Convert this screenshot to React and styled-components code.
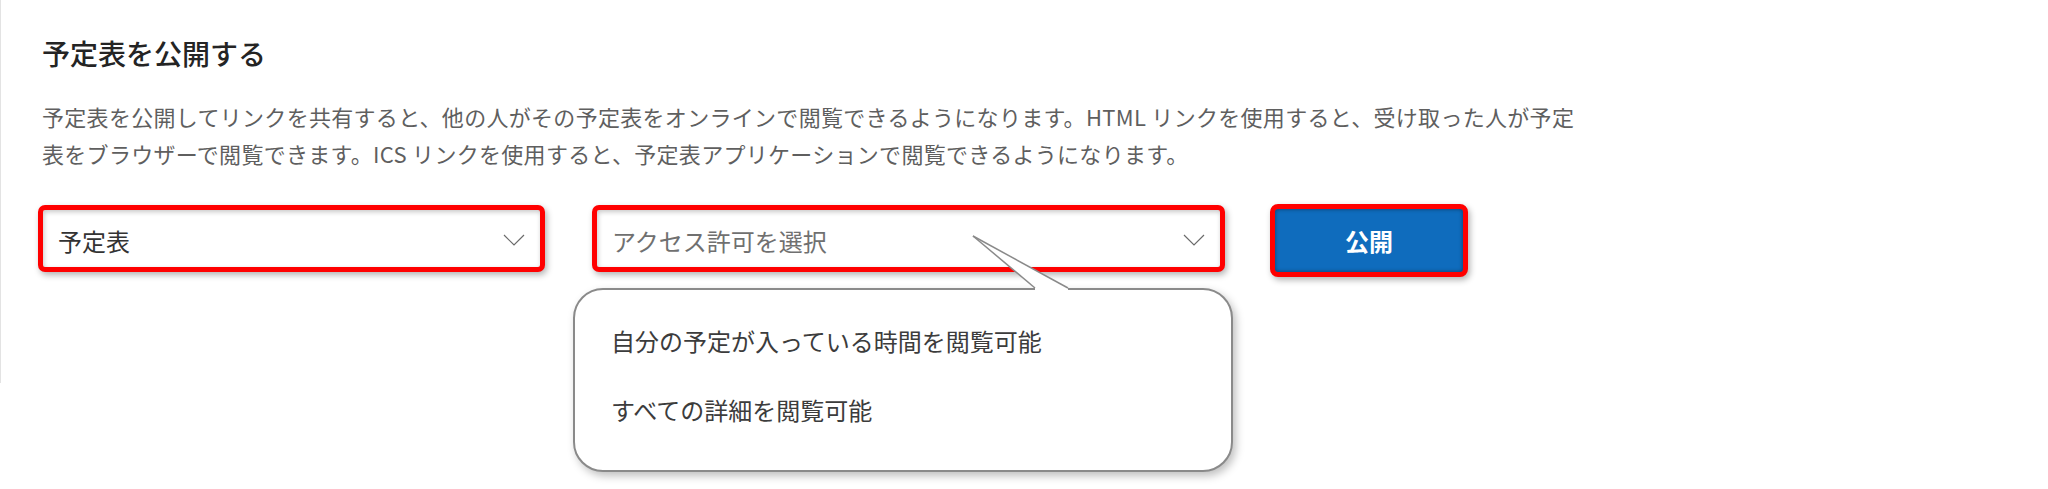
import React from 'react';
import styled, { createGlobalStyle } from 'styled-components';

const GlobalStyle = createGlobalStyle`
  body {
    margin: 0;
    background: #ffffff;
    font-family: "Noto Sans CJK JP", "Noto Sans", sans-serif;
  }
`;

const permissions = ['自分の予定が入っている時間を閲覧可能', 'すべての詳細を閲覧可能'];

const Chevron = () => (
  <svg width="22" height="12" viewBox="0 0 22 12">
    <polyline points="1,1 11,11 21,1" fill="none" stroke="#6b6b6b" strokeWidth="1.2" />
  </svg>
);

const App = () => (
  <Page>
    <GlobalStyle />
    <Panel>
      <Title>予定表を公開する</Title>
      <Description>
        予定表を公開してリンクを共有すると、他の人がその予定表をオンラインで閲覧できるようになります。HTML リンクを使用すると、受け取った人が予定
        <br />
        表をブラウザーで閲覧できます。ICS リンクを使用すると、予定表アプリケーションで閲覧できるようになります。
      </Description>
      <Controls>
        <Select width={507}>
          <SelectText>予定表</SelectText>
          <Chevron />
        </Select>
        <MenuAnchor>
          <Select width={633}>
            <SelectText $placeholder>アクセス許可を選択</SelectText>
            <Chevron />
          </Select>
          <Callout>
            <Tail width="105" height="58" viewBox="0 0 105 58">
              <polygon points="5,1 100,53 100,57 67,57 67,53" fill="#ffffff" />
              <line x1="5" y1="1" x2="67" y2="53" stroke="#8a8a8a" strokeWidth="1.5" />
              <line x1="5" y1="1" x2="100" y2="53" stroke="#8a8a8a" strokeWidth="1.5" />
            </Tail>
            {permissions.map((item) => (
              <Option key={item}>{item}</Option>
            ))}
          </Callout>
        </MenuAnchor>
        <PublishButton>公開</PublishButton>
      </Controls>
    </Panel>
  </Page>
);

const Page = styled.div`
  height: 489px;
  overflow: visible;
`;

const Panel = styled.div`
  box-sizing: border-box;
  height: 383px;
  padding: 34px 0 0 37px;
  border-left: 1px solid #e3e3e3;
`;

const Title = styled.h2`
  margin: 0 0 0 4px;
  font-size: 28px;
  line-height: 38px;
  font-weight: 500;
  color: #242424;
`;

const Description = styled.p`
  margin: 26px 0 0 4px;
  font-size: 22px;
  line-height: 37px;
  letter-spacing: 0.3px;
  color: #5f5f5f;
  white-space: nowrap;
`;

const Controls = styled.div`
  display: flex;
  align-items: flex-start;
  margin-top: 32px;
`;

const Select = styled.div`
  box-sizing: border-box;
  width: ${(p) => p.width}px;
  height: 67px;
  margin-top: 1px;
  display: flex;
  align-items: center;
  justify-content: space-between;
  padding: 3px 15px 0 15px;
  border: 5px solid #ff0000;
  border-radius: 7px;
  background: #ffffff;
  box-shadow: 2px 3px 6px rgba(0, 0, 0, 0.3), inset 1px 2px 5px rgba(0, 0, 0, 0.22);
`;

const SelectText = styled.span`
  font-size: 24px;
  color: ${(p) => (p.$placeholder ? '#707070' : '#333333')};
`;

const MenuAnchor = styled.div`
  position: relative;
  margin-left: 47px;
`;

const Callout = styled.div`
  position: absolute;
  z-index: 2;
  left: -19px;
  top: 84px;
  box-sizing: border-box;
  width: 660px;
  height: 184px;
  padding: 31px 0 0 36px;
  display: flex;
  flex-direction: column;
  gap: 29px;
  background: #ffffff;
  border: 2px solid #8a8a8a;
  border-radius: 30px;
  box-shadow: 3px 4px 9px rgba(0, 0, 0, 0.25);
`;

const Tail = styled.svg`
  position: absolute;
  left: 393px;
  top: -55px;
`;

const Option = styled.div`
  font-size: 24px;
  line-height: 40px;
  color: #3c3c3c;
`;

const PublishButton = styled.button`
  box-sizing: border-box;
  width: 198px;
  height: 73px;
  margin-left: 45px;
  border: 5px solid #ff0000;
  border-radius: 8px;
  background: #0f6cbd;
  color: #ffffff;
  font-family: "Noto Sans CJK JP", sans-serif;
  font-size: 24px;
  font-weight: 700;
  box-shadow: 2px 3px 6px rgba(0, 0, 0, 0.3), inset 0 0 4px rgba(0, 0, 0, 0.45);
`;

export default App;
